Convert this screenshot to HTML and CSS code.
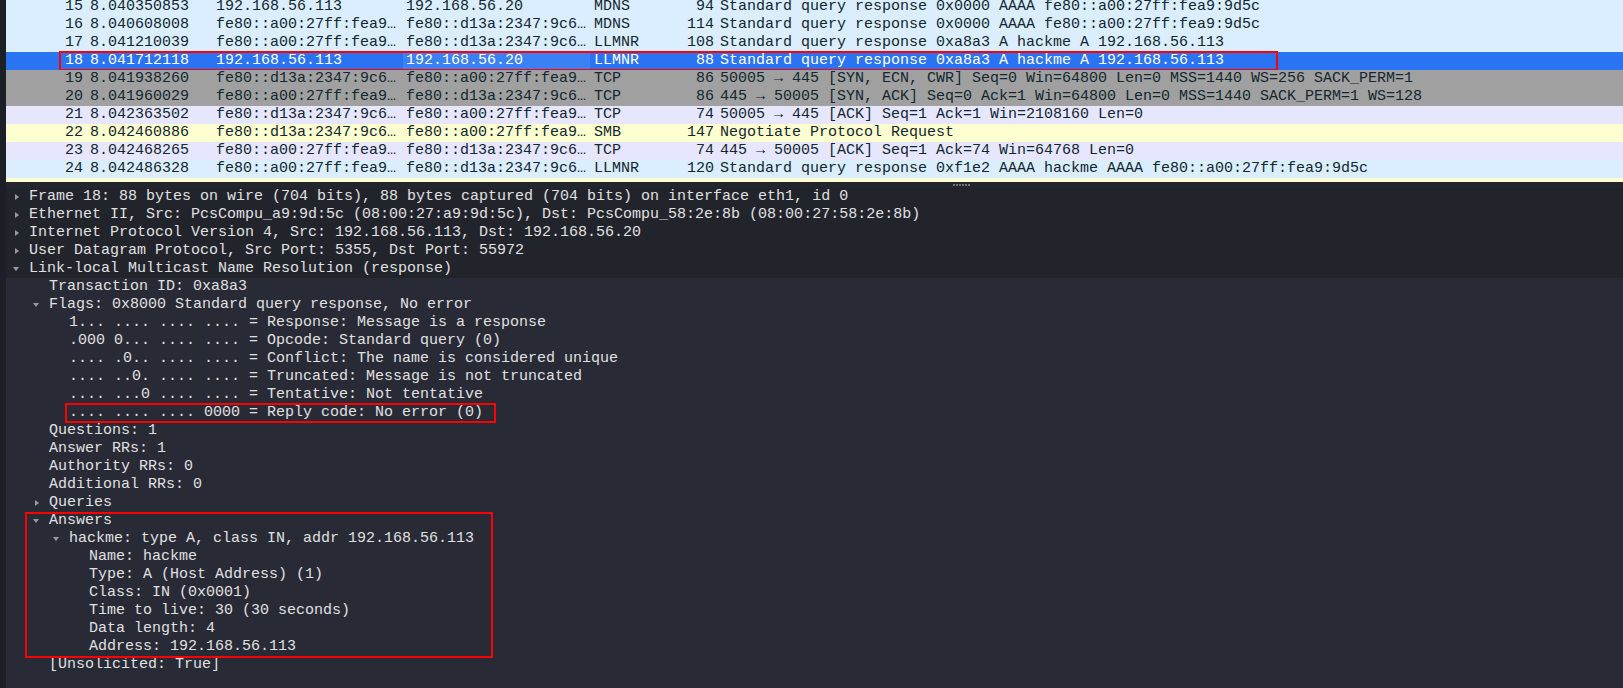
FILE: index.html
```html
<!DOCTYPE html>
<html>
<head>
<meta charset="utf-8">
<link rel="stylesheet" href="styles.css">
</head>
<body>
<div class="app">
  <div class="edge"></div>
  <div class="main">
    <div class="plist">
      <div class="rows">
        <div class="prow udp"><span class="c-no">15</span><span class="c-time">8.040350853</span><span class="c-src">192.168.56.113</span><span class="c-dst">192.168.56.20</span><span class="c-proto">MDNS</span><span class="c-len">94</span><span class="c-info">Standard query response 0x0000 AAAA fe80::a00:27ff:fea9:9d5c</span></div>
        <div class="prow udp"><span class="c-no">16</span><span class="c-time">8.040608008</span><span class="c-src">fe80::a00:27ff:fea9…</span><span class="c-dst">fe80::d13a:2347:9c6…</span><span class="c-proto">MDNS</span><span class="c-len">114</span><span class="c-info">Standard query response 0x0000 AAAA fe80::a00:27ff:fea9:9d5c</span></div>
        <div class="prow udp"><span class="c-no">17</span><span class="c-time">8.041210039</span><span class="c-src">fe80::a00:27ff:fea9…</span><span class="c-dst">fe80::d13a:2347:9c6…</span><span class="c-proto">LLMNR</span><span class="c-len">108</span><span class="c-info">Standard query response 0xa8a3 A hackme A 192.168.56.113</span></div>
        <div class="prow sel"><span class="c-no">18</span><span class="c-time">8.041712118</span><span class="c-src">192.168.56.113</span><span class="c-dst">192.168.56.20</span><span class="c-proto">LLMNR</span><span class="c-len">88</span><span class="c-info">Standard query response 0xa8a3 A hackme A 192.168.56.113</span></div>
        <div class="prow syn"><span class="c-no">19</span><span class="c-time">8.041938260</span><span class="c-src">fe80::d13a:2347:9c6…</span><span class="c-dst">fe80::a00:27ff:fea9…</span><span class="c-proto">TCP</span><span class="c-len">86</span><span class="c-info">50005 → 445 [SYN, ECN, CWR] Seq=0 Win=64800 Len=0 MSS=1440 WS=256 SACK_PERM=1</span></div>
        <div class="prow syn"><span class="c-no">20</span><span class="c-time">8.041960029</span><span class="c-src">fe80::a00:27ff:fea9…</span><span class="c-dst">fe80::d13a:2347:9c6…</span><span class="c-proto">TCP</span><span class="c-len">86</span><span class="c-info">445 → 50005 [SYN, ACK] Seq=0 Ack=1 Win=64800 Len=0 MSS=1440 SACK_PERM=1 WS=128</span></div>
        <div class="prow tcp"><span class="c-no">21</span><span class="c-time">8.042363502</span><span class="c-src">fe80::d13a:2347:9c6…</span><span class="c-dst">fe80::a00:27ff:fea9…</span><span class="c-proto">TCP</span><span class="c-len">74</span><span class="c-info">50005 → 445 [ACK] Seq=1 Ack=1 Win=2108160 Len=0</span></div>
        <div class="prow smb"><span class="c-no">22</span><span class="c-time">8.042460886</span><span class="c-src">fe80::d13a:2347:9c6…</span><span class="c-dst">fe80::a00:27ff:fea9…</span><span class="c-proto">SMB</span><span class="c-len">147</span><span class="c-info">Negotiate Protocol Request</span></div>
        <div class="prow tcp"><span class="c-no">23</span><span class="c-time">8.042468265</span><span class="c-src">fe80::a00:27ff:fea9…</span><span class="c-dst">fe80::d13a:2347:9c6…</span><span class="c-proto">TCP</span><span class="c-len">74</span><span class="c-info">445 → 50005 [ACK] Seq=1 Ack=74 Win=64768 Len=0</span></div>
        <div class="prow udp"><span class="c-no">24</span><span class="c-time">8.042486328</span><span class="c-src">fe80::a00:27ff:fea9…</span><span class="c-dst">fe80::d13a:2347:9c6…</span><span class="c-proto">LLMNR</span><span class="c-len">120</span><span class="c-info">Standard query response 0xf1e2 AAAA hackme AAAA fe80::a00:27ff:fea9:9d5c</span></div>
        <div class="prow smb"></div>
      </div>
    </div>
    <div class="splitter"><span class="grip"></span></div>
    <div class="details">
      <div class="top">
        <div class="drow l0"><span class="tw closed"></span>Frame 18: 88 bytes on wire (704 bits), 88 bytes captured (704 bits) on interface eth1, id 0</div>
        <div class="drow l0"><span class="tw closed"></span>Ethernet II, Src: PcsCompu_a9:9d:5c (08:00:27:a9:9d:5c), Dst: PcsCompu_58:2e:8b (08:00:27:58:2e:8b)</div>
        <div class="drow l0"><span class="tw closed"></span>Internet Protocol Version 4, Src: 192.168.56.113, Dst: 192.168.56.20</div>
        <div class="drow l0"><span class="tw closed"></span>User Datagram Protocol, Src Port: 5355, Dst Port: 55972</div>
        <div class="drow l0"><span class="tw open"></span>Link-local Multicast Name Resolution (response)</div>
      </div>
      <div class="drow l1"><span class="tw"></span>Transaction ID: 0xa8a3</div>
      <div class="drow l1"><span class="tw open"></span>Flags: 0x8000 Standard query response, No error</div>
      <div class="drow l2"><span class="tw"></span>1... .... .... .... = Response: Message is a response</div>
      <div class="drow l2"><span class="tw"></span>.000 0... .... .... = Opcode: Standard query (0)</div>
      <div class="drow l2"><span class="tw"></span>.... .0.. .... .... = Conflict: The name is considered unique</div>
      <div class="drow l2"><span class="tw"></span>.... ..0. .... .... = Truncated: Message is not truncated</div>
      <div class="drow l2"><span class="tw"></span>.... ...0 .... .... = Tentative: Not tentative</div>
      <div class="annot annot-reply">
        <div class="drow l2"><span class="tw"></span>.... .... .... 0000 = Reply code: No error (0)</div>
      </div>
      <div class="drow l1"><span class="tw"></span>Questions: 1</div>
      <div class="drow l1"><span class="tw"></span>Answer RRs: 1</div>
      <div class="drow l1"><span class="tw"></span>Authority RRs: 0</div>
      <div class="drow l1"><span class="tw"></span>Additional RRs: 0</div>
      <div class="drow l1"><span class="tw closed"></span>Queries</div>
      <div class="annot annot-answers">
        <div class="drow l1"><span class="tw open"></span>Answers</div>
        <div class="drow l2"><span class="tw open"></span>hackme: type A, class IN, addr 192.168.56.113</div>
        <div class="drow l3"><span class="tw"></span>Name: hackme</div>
        <div class="drow l3"><span class="tw"></span>Type: A (Host Address) (1)</div>
        <div class="drow l3"><span class="tw"></span>Class: IN (0x0001)</div>
        <div class="drow l3"><span class="tw"></span>Time to live: 30 (30 seconds)</div>
        <div class="drow l3"><span class="tw"></span>Data length: 4</div>
        <div class="drow l3"><span class="tw"></span>Address: 192.168.56.113</div>
      </div>
      <div class="drow l1"><span class="tw"></span>[Unsolicited: True]</div>
    </div>
  </div>
</div>
</body>
</html>
```
FILE: styles.css
```css
* { box-sizing: border-box; }
html, body {
  margin: 0;
  padding: 0;
  width: 1623px;
  height: 688px;
  overflow: hidden;
  background: #282a36;
  font-family: "Liberation Mono", "DejaVu Sans Mono", monospace;
  font-size: 15px;
}
.app {
  display: flex;
  height: 688px;
}
.edge {
  width: 6px;
  flex: none;
  background: #1d1f26;
}
.main {
  flex: 1;
  display: flex;
  flex-direction: column;
  min-width: 0;
}
.plist {
  height: 182px;
  overflow: hidden;
  flex: none;
  background: #ffffff;
}
.rows {
  margin-top: -2px;
}
.prow {
  display: flex;
  height: 18px;
  line-height: 18px;
  white-space: nowrap;
  color: #12272e;
  position: relative;
}
.prow span { display: block; overflow: hidden; flex: none; }
.udp { background: #daeeff; }
.tcp { background: #e7e6ff; }
.syn { background: #a0a0a0; }
.smb { background: #feffd0; }
.sel { background: #2a74f3; color: #ffffff; }
.sel .c-dst { background: #3a81f6; }
.sel::after {
  content: "";
  position: absolute;
  left: 53px;
  width: 1215px;
  top: -1px;
  bottom: -1px;
  border: 2px solid #ff0000;
}
.c-no { width: 80px; text-align: right; padding-right: 3px; }
.c-time { width: 124px; padding-left: 4px; }
.c-src { width: 193px; padding-left: 6px; }
.c-dst { width: 187px; padding-left: 3px; }
.c-proto { width: 90px; padding-left: 4px; }
.c-len { width: 37px; text-align: right; padding-right: 3px; }
.c-info { flex: 1 !important; padding-left: 3px; }

.splitter {
  height: 6px;
  flex: none;
  background: #25262d;
  display: flex;
  align-items: center;
  padding-left: 947px;
}
.grip {
  width: 17px;
  height: 2px;
  background: repeating-linear-gradient(90deg, #70727a 0 2px, transparent 2px 3px);
}
.details {
  flex: 1;
  background: #282a36;
  color: #e0e0e0;
  overflow: hidden;
}
.top { background: #22242c; }
.drow {
  height: 18px;
  line-height: 18px;
  white-space: nowrap;
  display: flex;
  align-items: center;
}
.l0 { padding-left: 3px; }
.l1 { padding-left: 23px; }
.l2 { padding-left: 43px; }
.l3 { padding-left: 63px; }
.tw {
  width: 20px;
  height: 18px;
  flex: none;
  position: relative;
}
.tw.closed::before {
  content: "";
  position: absolute;
  left: 6px;
  top: 5.5px;
  border-left: 4px solid #9a9ba0;
  border-top: 3.5px solid transparent;
  border-bottom: 3.5px solid transparent;
}
.tw.open::before {
  content: "";
  position: absolute;
  left: 4px;
  top: 7px;
  border-top: 4px solid #9a9ba0;
  border-left: 3.5px solid transparent;
  border-right: 3.5px solid transparent;
}
.annot { position: relative; }
.annot::after {
  content: "";
  position: absolute;
  top: -1px;
  bottom: -1px;
  border: 2px solid #ff0000;
  pointer-events: none;
}
.annot-reply::after { left: 59px; width: 427px; }
.annot-answers::after { left: 19px; width: 464px; top: 0; bottom: -2px; }
```
